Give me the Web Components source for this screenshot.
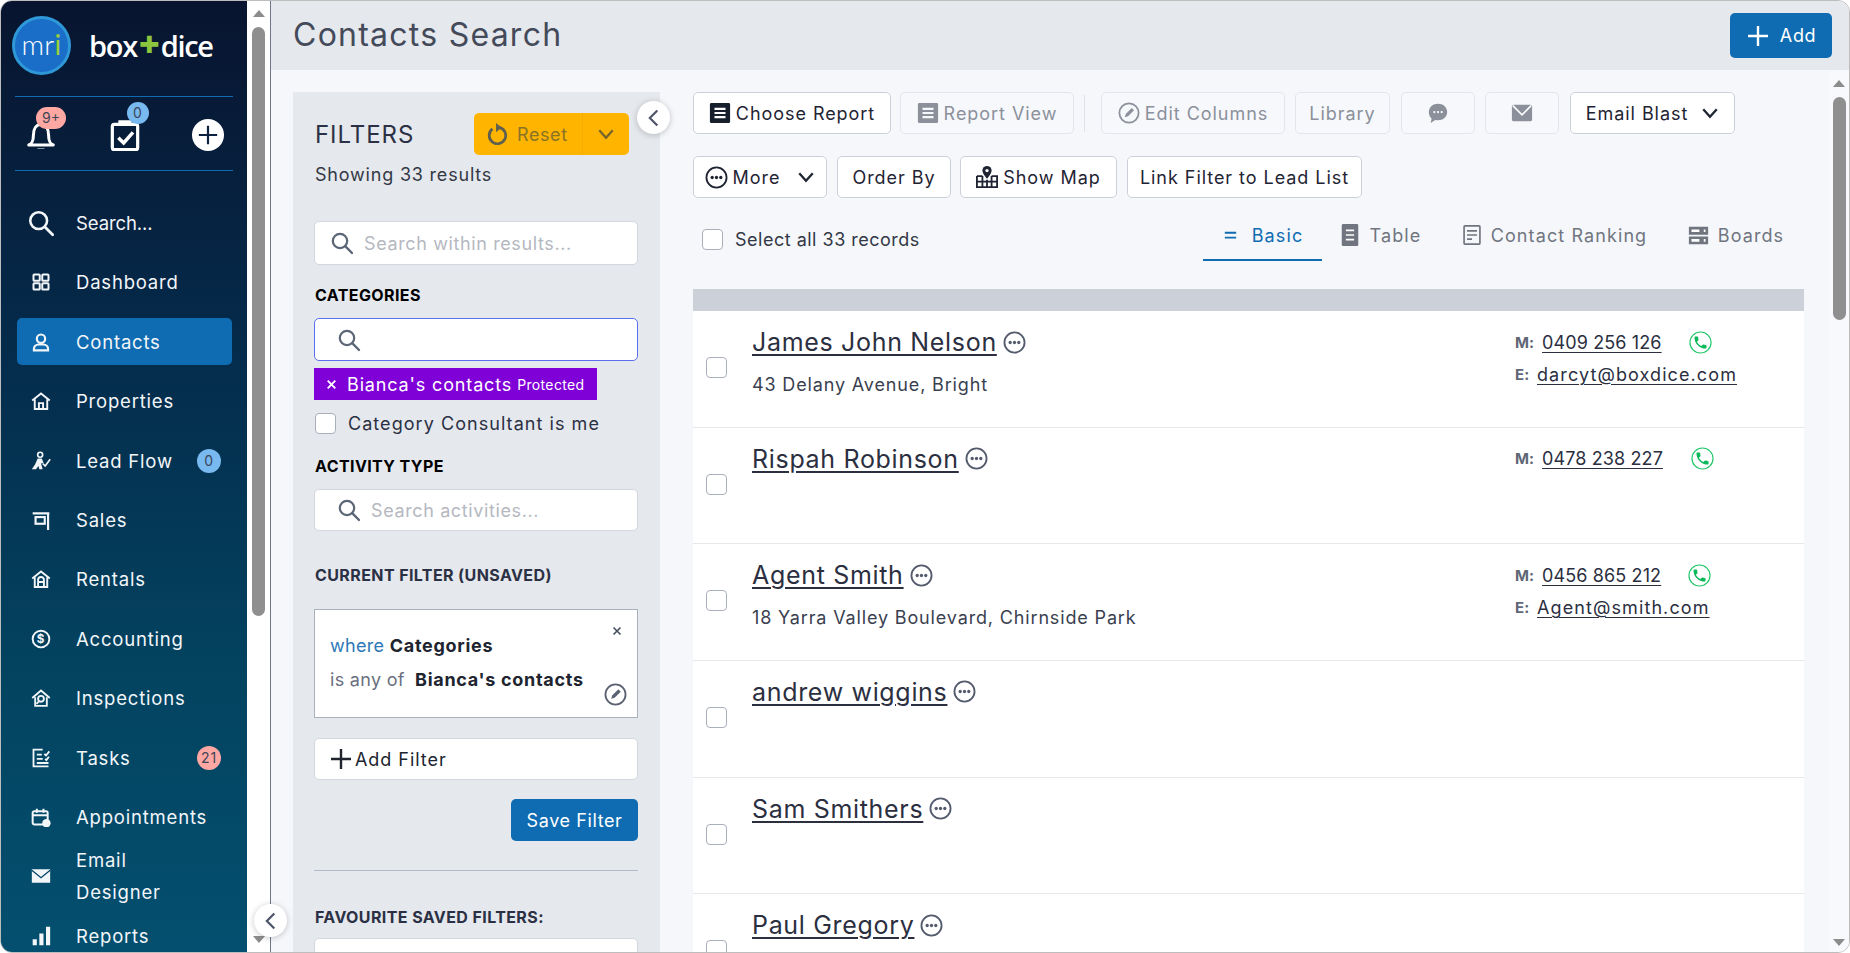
<!DOCTYPE html>
<html lang="en">
<head>
<meta charset="utf-8">
<title>Contacts Search</title>
<style>
html, body { margin: 0; height: 100%; overflow: hidden; background: #fff; }
body { font-family: Inter, "Open Sans", "Liberation Sans", sans-serif; color: #2b3044; }
</style>
</head>
<body>
<bd-app></bd-app>
<script>
// every icon used on the page, keyed by name
const ICONS = {
  search: '<circle cx="10" cy="10" r="7.2" fill="none" stroke="currentColor" stroke-width="2.2"/><path d="M15.2 15.2 22 22" stroke="currentColor" stroke-width="2.4" stroke-linecap="round"/>',
  dashboard: '<g fill="none" stroke="currentColor" stroke-width="2.4"><rect x="3" y="3" width="7.5" height="7.5" rx="1"/><rect x="13.5" y="3" width="7.5" height="7.5" rx="1"/><rect x="3" y="13.5" width="7.5" height="7.5" rx="1"/><rect x="13.5" y="13.5" width="7.5" height="7.5" rx="1"/></g>',
  contacts: '<g fill="none" stroke="currentColor" stroke-width="2.6"><circle cx="12" cy="8" r="5"/><path d="M3.5 22v-1.5c0-3.2 2.6-5.5 5.5-5.5h6c2.9 0 5.5 2.3 5.5 5.5V22z"/></g>',
  properties: '<g fill="none" stroke="currentColor" stroke-width="2.3"><path d="M1.5 11.5 12 3l10.5 8.5"/><path d="M4.5 10v11.5h15V10"/><path d="M9.5 21.5v-7h5v7"/></g>',
  leadflow: '<circle cx="11" cy="4.5" r="3" fill="none" stroke="currentColor" stroke-width="2"/><path d="M8 9h5l2 5-3 1 2 7H10l-1-4-3 4H1l4-6z" fill="currentColor"/><path d="m14 15 3 3 6-8" fill="none" stroke="currentColor" stroke-width="2"/>',
  sales: '<path d="M2 4h20M20.5 4v20" fill="none" stroke="currentColor" stroke-width="2.6"/><rect x="5.5" y="8.5" width="11" height="8" fill="none" stroke="currentColor" stroke-width="2.6"/>',
  rentals: '<g fill="none" stroke="currentColor" stroke-width="2.3"><path d="M1.5 11.5 12 3l10.5 8.5"/><path d="M4.5 10v11.5h15V10"/><path d="M8.5 21.5V13a3.5 3.5 0 0 1 7 0v8.5M8.5 15.5h7"/></g>',
  accounting: '<circle cx="12" cy="12" r="10" fill="none" stroke="currentColor" stroke-width="2.3"/><text x="12" y="17" font-size="14" font-weight="700" text-anchor="middle" fill="currentColor">$</text>',
  inspections: '<g fill="none" stroke="currentColor" stroke-width="2.2"><path d="M1.5 12 12 3l10.5 9"/><path d="M5 11v10.5h14V11"/><circle cx="12" cy="13" r="3.5"/><path d="m9.5 16-3 3"/></g>',
  tasks: '<g fill="none" stroke="currentColor" stroke-width="2.2"><path d="M21 22H3V2h11"/><path d="M7 8h6M7 13h7M7 18h14"/><path d="m16 7 2 2 4-5M17 13l1.5 1.5 3-4"/></g>',
  appointments: '<g fill="none" stroke="currentColor" stroke-width="2.4"><rect x="2" y="5" width="18" height="16" rx="2"/><path d="M2 10h18M7 2v5M15 2v5"/></g><circle cx="18.5" cy="19.5" r="5" fill="currentColor"/>',
  email: '<path d="M1 4h22v16H1z" fill="currentColor"/><path d="m1 5 11 9 11-9" fill="none" stroke="#024463" stroke-width="1.5"/>',
  reports: '<path d="M2 16h5v7H2zM10 9h5v14h-5zM18 1h5v22h-5z" fill="currentColor"/>',
  bell: '<path d="M1.5 20.5c2.500-1 4-2.500 4-8.500 0-5.500 2.500-9 6.500-9s6.500 3.500 6.500 9c0 6 1.500 7.500 4 8.500z" fill="none" stroke="currentColor" stroke-width="2.6" stroke-linejoin="round"/><path d="M9 23.500h6a3 3 0 0 1-6 0z" fill="currentColor"/>',
  clipboard: '<rect x="2.5" y="4" width="19" height="19" rx="1.5" fill="none" stroke="currentColor" stroke-width="2.4"/><path d="M8 4V2h8v2" fill="none" stroke="currentColor" stroke-width="2"/><path d="m7 14 4 4 7-8" fill="none" stroke="currentColor" stroke-width="2.6"/>',
  plus: '<path d="M12 2v20M2 12h20" stroke="currentColor" stroke-width="2.4" fill="none"/>',
  chevronLeft: '<path d="M16 3 7 12l9 9" fill="none" stroke="currentColor" stroke-width="2.6"/>',
  chevronDown: '<path d="M3 7l9 10 9-10" fill="none" stroke="currentColor" stroke-width="3"/>',
  reset: '<path d="M7 6.5a9 9 0 1 0 8-1.5" fill="none" stroke="currentColor" stroke-width="3"/><path d="M11 0l6 5-6 5z" fill="currentColor"/>',
  close: '<path d="M5 5l14 14M19 5 5 19" stroke="currentColor" stroke-width="3.4" fill="none"/>',
  pencil: '<circle cx="12" cy="12" r="10.5" fill="none" stroke="currentColor" stroke-width="1.9"/><path d="M7.5 16.5l1-3.5 6.5-6.5 2.5 2.5-6.5 6.5z" fill="currentColor"/>',
  report: '<rect x="1" y="1" width="22" height="22" rx="1.5" fill="currentColor"/><path d="M6 7.5h12M6 12h12M6 16.5h12" stroke="var(--icon-cut, #fff)" stroke-width="2.2"/>',
  dots: '<circle cx="12" cy="12" r="10.5" fill="none" stroke="currentColor" stroke-width="1.9"/><circle cx="7.5" cy="12" r="1.7" fill="currentColor"/><circle cx="12" cy="12" r="1.7" fill="currentColor"/><circle cx="16.5" cy="12" r="1.7" fill="currentColor"/>',
  map: '<path d="M1 11h6M17 11h6v12H1V11M1 17h22M7 11v12M12 15v8M17 11v12" fill="none" stroke="currentColor" stroke-width="2"/><path d="M12 0a5 5 0 0 0-5 5c0 3.5 5 9 5 9s5-5.500 5-9a5 5 0 0 0-5-5z" fill="currentColor"/><circle cx="12" cy="5" r="1.8" fill="#fff"/>',
  chat: '<path d="M12 2c5.5 0 10 3.8 10 9s-4.5 9-10 9c-1 0-2-.1-2.9-.4L4 23l1-4.9C3 16.5 2 14 2 11c0-5.2 4.500-9 10-9z" fill="currentColor"/><circle cx="8" cy="11" r="1.2" fill="#fff"/><circle cx="12" cy="11" r="1.2" fill="#fff"/><circle cx="16" cy="11" r="1.2" fill="#fff"/>',
  mail: '<rect x="1" y="3" width="22" height="18" rx="2" fill="currentColor"/><path d="m2 4 10 10L22 4" fill="none" stroke="#fff" stroke-width="1.7"/>',
  lines: '<path d="M4 8h16M4 15h16" stroke="currentColor" stroke-width="2.8" fill="none"/>',
  table: '<rect x="3" y="0" width="18" height="24" rx="1.5" fill="currentColor"/><path d="M7.5 7h9M7.5 12h9M7.5 17h9" stroke="#fff" stroke-width="1.8"/>',
  ranking: '<rect x="2.5" y="1" width="19" height="22" rx="1" fill="none" stroke="currentColor" stroke-width="2"/><path d="M6 7h12M6 12h12M6 17h6" stroke="currentColor" stroke-width="2" fill="none"/>',
  boards: '<path d="M1 2h22v9H1zM1 13h22v9H1z" fill="currentColor"/><path d="M4 5h9v3H4zM4 16h9v3H4z M18 5h2v3h-2zM18 16h2v3h-2z" fill="#fff"/>',
  phone: '<circle cx="12" cy="12" r="11" fill="none" stroke="#22c76a" stroke-width="1.2"/><path transform="translate(3.6 3.6) scale(.7)" d="M6.6 10.8c1.4 2.8 3.8 5.1 6.6 6.6l2.2-2.2c.3-.3.7-.4 1-.2 1.1.4 2.3.6 3.6.6.6 0 1 .4 1 1V20c0 .6-.4 1-1 1C10.6 21 3 13.4 3 4c0-.6.4-1 1-1h3.5c.6 0 1 .4 1 1 0 1.3.2 2.5.6 3.6.1.3 0 .7-.2 1z" fill="#0bb85a"/>'
};

function icon(name, size, extra) {
  return `<svg viewBox="0 0 24 24" width="${size}" height="${size}" style="display:block;flex:none;${extra || ''}" aria-hidden="true">${ICONS[name]}</svg>`;
}

function mount(el, html) {
  el.attachShadow({ mode: 'open' }).innerHTML = html;
}

// grey scroll rail, thumb sizes come from attributes
class FakeScrollbar extends HTMLElement {
  connectedCallback() {
    const top = this.getAttribute('top');
    const len = this.getAttribute('length');
    mount(this, `<style>
      :host { display: flex; flex-direction: column; align-items: center; height: 100%; width: 100%; box-sizing: border-box; }
      .up, .down { width: 0; height: 0; border-left: 6px solid transparent; border-right: 6px solid transparent; flex: none; }
      .up { border-bottom: 7px solid #8c8c8c; margin-top: ${this.getAttribute('arrow') || 9}px; }
      .thumb { width: 13px; height: ${len}px; margin-top: ${top}px; background: #8f8f8f; border-radius: 7px; flex: none; }
      .down { border-top: 7px solid #8c8c8c; margin-top: auto; margin-bottom: ${this.getAttribute('bottom') || 9}px; }
    </style><div class="up"></div><div class="thumb"></div><div class="down"></div>`);
  }
}
customElements.define('fake-scrollbar', FakeScrollbar);

class RoundToggle extends HTMLElement {
  connectedCallback() {
    mount(this, `<style>
      :host { display: flex; position: absolute; width: 33px; height: 33px; border-radius: 50%; background: #fff; box-shadow: 0 1px 6px rgba(0,0,0,.22); align-items: center; justify-content: center; color: #4d5468; z-index: 5; }
    </style>${icon('chevronLeft', 20)}`);
  }
}
customElements.define('round-toggle', RoundToggle);

class CountBadge extends HTMLElement {
  connectedCallback() {
    const color = this.getAttribute('color');
    mount(this, `<style>
      :host { display: inline-flex; align-items: center; justify-content: center; background: ${color}; color: #3d4558; font-size: 14px; min-width: 24px; height: 24px; border-radius: 12px; box-sizing: border-box; font-weight: 400; }
    </style><slot></slot>`);
  }
}
customElements.define('count-badge', CountBadge);

class NavItem extends HTMLElement {
  connectedCallback() {
    const active = this.hasAttribute('active');
    const size = this.getAttribute('size') || 20;
    mount(this, `<style>
      :host { display: block; height: 47px; margin: 0 15px 0 16px; }
      .item { display: flex; align-items: center; height: 100%; border-radius: 5px; color: #f2f6f9; background: ${active ? '#0f6cb2' : 'transparent'}; font-size: 18.5px; line-height: 32px; letter-spacing: .8px; }
      .ico { width: 48px; display: flex; justify-content: center; flex: none; }
      .label { margin-left: 11px; flex: 1; }
      .badge { margin-right: 11px; display: flex; }
    </style>
    <div class="item">
      <span class="ico">${icon(this.getAttribute('icon'), size)}</span>
      <span class="label"><slot></slot></span>
      <span class="badge"><slot name="badge"></slot></span>
    </div>`);
  }
}
customElements.define('nav-item', NavItem);

class BdLogo extends HTMLElement {
  connectedCallback() {
    mount(this, `<style>
      :host { display: flex; align-items: center; height: 95px; padding: 0 0 6px 11px; box-sizing: border-box; }
      .mri { border-radius: 50%; background: #1a6ec8; border: 3px solid #2f98d8; display: flex; align-items: center; justify-content: center; color: #fff; font: 300 28px/1 Lato, sans-serif; letter-spacing: .3px; padding-bottom: 3px; flex: none; width: 53px; height: 50px; }
      .mri b { font-weight: 400; color: #9ccf3c; }
      .word { margin-left: 18px; color: #fff; font: 600 29px/1 "Open Sans", sans-serif; letter-spacing: -1.3px; display: flex; align-items: center; }
      .word i { font-style: normal; color: #8cc63f; font-weight: 800; font-size: 36px; margin: -3px 2px 0 2px; }
    </style>
    <div class="mri"><span>mr<b>i</b></span></div>
    <div class="word">box<i>+</i>dice</div>`);
  }
}
customElements.define('bd-logo', BdLogo);

class QuickIcons extends HTMLElement {
  connectedCallback() {
    mount(this, `<style>
      :host { display: block; position: relative; height: 73px; margin: 0 14px 0 14px; border-top: 1px solid #0f6cb2; border-bottom: 1px solid #0f6cb2; color: #fff; }
      .row { display: flex; height: 100%; align-items: center; padding-left: 12px; }
      .slot { position: relative; width: 83.5px; flex: none; margin-top: 2px; }
      .pill { position: absolute; left: 9px; top: -14px; width: 30px; height: 22px; background: #ffa8a3; border-radius: 11px; color: #3d4558; font-size: 14px; display: flex; align-items: center; justify-content: center; }
      .dot { position: absolute; left: 16px; top: -17px; width: 22px; height: 22px; background: #78b9f0; border-radius: 50%; color: #3d4558; font-size: 14px; display: flex; align-items: center; justify-content: center; }
      .add { width: 32px; height: 32px; border-radius: 50%; background: #fff; color: #0b2242; display: flex; align-items: center; justify-content: center; margin-left: -2px; }
    </style>
    <div class="row">
      <div class="slot">${icon('bell', 28)}<span class="pill">9+</span></div>
      <div class="slot">${icon('clipboard', 32, 'margin-left:-2px')}<span class="dot">0</span></div>
      <div class="slot"><div class="add">${icon('plus', 22)}</div></div>
    </div>`);
  }
}
customElements.define('quick-icons', QuickIcons);

class BdSidebar extends HTMLElement {
  connectedCallback() {
    mount(this, `<style>
      :host { display: flex; position: relative; width: 269px; height: 100%; flex: none; border-right: 1px solid #70758c; box-sizing: content-box; }
      .panel { width: 246px; height: 100%; background: linear-gradient(180deg, #08142f 0%, #052a4a 35%, #034360 70%, #044f6f 100%); overflow: hidden; flex: none; }
      nav { display: flex; flex-direction: column; gap: 12.4px; padding-top: 28.5px; }
      .rail { width: 23px; height: 100%; background: #fff; }
      round-toggle { left: 253px; bottom: 15px; }
    </style>
    <div class="panel">
      <bd-logo></bd-logo>
      <quick-icons></quick-icons>
      <nav>
        <nav-item icon="search" size="28"><span style="letter-spacing:-.1px">Search...</span></nav-item>
        <nav-item icon="dashboard">Dashboard</nav-item>
        <nav-item icon="contacts" active>Contacts</nav-item>
        <nav-item icon="properties">Properties</nav-item>
        <nav-item icon="leadflow">Lead Flow<count-badge slot="badge" color="#78b9f0">0</count-badge></nav-item>
        <nav-item icon="sales">Sales</nav-item>
        <nav-item icon="rentals">Rentals</nav-item>
        <nav-item icon="accounting">Accounting</nav-item>
        <nav-item icon="inspections">Inspections</nav-item>
        <nav-item icon="tasks">Tasks<count-badge slot="badge" color="#ffa8a3">21</count-badge></nav-item>
        <nav-item icon="appointments">Appointments</nav-item>
        <nav-item icon="email">Email<br>Designer</nav-item>
        <nav-item icon="reports">Reports</nav-item>
      </nav>
    </div>
    <div class="rail"><fake-scrollbar top="10" length="589" arrow="9" bottom="9"></fake-scrollbar></div>
    <round-toggle></round-toggle>`);
  }
}
customElements.define('bd-sidebar', BdSidebar);

class BdButton extends HTMLElement {
  connectedCallback() {
    const off = this.hasAttribute('disabled');
    mount(this, `<style>
      :host { display: inline-flex; width: ${this.getAttribute('width')}px; height: 42px; flex: none; box-sizing: border-box; align-items: center; justify-content: center; gap: 5px; border: 1px solid ${off ? '#e2e5eb' : '#ccd0d8'}; border-radius: 5px; background: ${off ? '#f7f8fb' : '#fff'}; color: ${off ? '#8b909b' : '#1f2433'}; font-size: 18px; letter-spacing: .95px; --icon-cut: ${off ? '#f7f8fb' : '#fff'}; white-space: nowrap; }
    </style><slot name="icon"></slot><slot></slot>`);
  }
}
customElements.define('bd-button', BdButton);

// plain icon span, so light DOM callers can drop icons into slots
class BdIcon extends HTMLElement {
  connectedCallback() {
    mount(this, `<style>:host { display: inline-flex; color: ${this.getAttribute('color') || 'inherit'}; }</style>${icon(this.getAttribute('name'), this.getAttribute('size') || 22)}`);
  }
}
customElements.define('bd-icon', BdIcon);

class TickBox extends HTMLElement {
  connectedCallback() {
    mount(this, `<style>
      :host { display: block; width: 21px; height: 21px; flex: none; box-sizing: border-box; background: #fff; border: 1px solid #a9afbb; border-radius: 4px; }
    </style>`);
  }
}
customElements.define('tick-box', TickBox);

class FilterInput extends HTMLElement {
  connectedCallback() {
    const focused = this.hasAttribute('focused');
    const pad = this.getAttribute('pad') || 22;
    const ph = this.getAttribute('placeholder') || '';
    const showIcon = !this.hasAttribute('noicon');
    mount(this, `<style>
      :host { display: flex; align-items: center; height: ${this.getAttribute('height') || 42}px; width: 324px; box-sizing: border-box; margin-left: -1px; padding-left: ${pad}px; background: #fff; border: 1px solid ${focused ? '#5a6ff0' : '#d3d7de'}; border-radius: 5px; color: #5b6676; }
      span { margin-left: ${this.getAttribute('gap') || 10}px; color: #b5b8bf; font-size: 18px; letter-spacing: .62px; white-space: nowrap; }
    </style>${showIcon ? icon('search', 24) : ''}<span>${ph}</span>`);
  }
}
customElements.define('filter-input', FilterInput);

class SectionLabel extends HTMLElement {
  connectedCallback() {
    mount(this, `<style>
      :host { display: block; height: 20px; line-height: 20px; font-size: 16px; font-weight: 700; color: ${this.getAttribute('color') || '#000'}; white-space: nowrap; letter-spacing: .4px; }
    </style><slot></slot>`);
  }
}
customElements.define('section-label', SectionLabel);

class ResetButton extends HTMLElement {
  connectedCallback() {
    mount(this, `<style>
      :host { display: flex; width: 155px; height: 42px; background: #ffb400; border-radius: 5px; color: #8a7326; font-size: 18px; letter-spacing: .6px; flex: none; }
      .main { width: 109px; display: flex; align-items: center; padding-left: 12px; box-sizing: border-box; gap: 9px; border-right: 1px solid #f5ae00; }
      .more { flex: 1; display: flex; align-items: center; justify-content: center; color: #75652c; }
      .main svg { color: #5f5f50; }
    </style>
    <div class="main">${icon('reset', 22)}<span>Reset</span></div>
    <div class="more">${icon('chevronDown', 18)}</div>`);
  }
}
customElements.define('reset-button', ResetButton);

class CategoryTag extends HTMLElement {
  connectedCallback() {
    mount(this, `<style>
      :host { display: flex; align-items: center; width: 283px; height: 32px; margin-left: -1px; box-sizing: border-box; background: #8000d8; color: #fff; padding-left: 11px; font-size: 18px; letter-spacing: .85px; white-space: nowrap; }
      small { font-size: 14px; margin-left: 5px; letter-spacing: .35px; }
      svg { margin-right: 9px; }
    </style>${icon('close', 13)}<slot></slot><small>Protected</small>`);
  }
}
customElements.define('category-tag', CategoryTag);

class FilterCard extends HTMLElement {
  connectedCallback() {
    mount(this, `<style>
      :host { display: block; position: relative; height: 109px; width: 324px; margin-left: -1px; box-sizing: border-box; background: #fff; border: 1px solid #a9afbb; padding: 19px 15px 0; font-size: 18px; letter-spacing: .3px; }
      p { margin: 0; height: 34px; line-height: 34px; white-space: nowrap; color: #6a7080; }
      b { color: #20242f; font-weight: 700; letter-spacing: .7px; }
      .where { color: #2b78b8; }
      .x { position: absolute; right: 14px; top: 15px; color: #4b5262; }
      .edit { position: absolute; right: 10px; bottom: 11px; color: #5b6272; }
      .tab { margin-left: 5px; }
    </style>
    <p><span class="where">where</span> <b>Categories</b></p>
    <p>is any of <b class="tab">Bianca's contacts</b></p>
    <span class="x">${icon('close', 12)}</span>
    <span class="edit">${icon('pencil', 23)}</span>`);
  }
}
customElements.define('filter-card', FilterCard);

class FilterPanel extends HTMLElement {
  connectedCallback() {
    mount(this, `<style>
      :host { display: block; position: relative; width: 367px; height: 100%; flex: none; background: #e5e8ed; box-sizing: border-box; padding: 21px 23px 0 22px; overflow: visible; }
      .clip { height: 100%; overflow: hidden; margin: 0 -1px 0 -1px; padding: 0 1px; }
      .head { display: flex; align-items: center; justify-content: space-between; height: 42px; padding-right: 8px; }
      h2 { margin: 0; font-size: 24px; font-weight: 400; color: #2b3044; letter-spacing: .95px; }
      .count { margin-top: 8px; height: 24px; line-height: 24px; font-size: 18px; letter-spacing: .8px; color: #333845; white-space: nowrap; }
      .check { display: flex; align-items: center; gap: 12px; height: 21px; margin-top: 13px; font-size: 18px; letter-spacing: 1.05px; color: #2b3044; white-space: nowrap; }
      .add { display: flex; align-items: center; gap: 2px; height: 42px; width: 324px; margin: 20px 0 0 -1px; padding-left: 14px; box-sizing: border-box; background: #fff; border: 1px solid #d3d7de; border-radius: 5px; font-size: 18px; letter-spacing: .95px; color: #20242f; }
      .save { display: flex; justify-content: flex-end; margin-top: 19px; margin-right: -1px; }
      .save span { display: flex; align-items: center; justify-content: center; width: 127px; height: 42px; background: #0f6cb2; color: #fff; border-radius: 5px; font-size: 18px; letter-spacing: .6px; }
      hr { border: 0; height: 1px; background: #b4b9c6; margin: 29px -1px 0 -1px; }
      round-toggle { right: -10px; top: 9px; }
    </style>
    <div class="clip">
    <div class="head"><h2>FILTERS</h2><reset-button></reset-button></div>
    <div class="count">Showing 33 results</div>
    <filter-input style="margin-top:34px" height="44" pad="15" gap="10" placeholder="Search within results..."></filter-input>
    <section-label style="margin-top:20px">CATEGORIES</section-label>
    <filter-input style="margin-top:13px" height="43" focused></filter-input>
    <category-tag style="margin-top:7px">Bianca's contacts</category-tag>
    <div class="check"><tick-box></tick-box>Category Consultant is me</div>
    <section-label style="margin-top:22px">ACTIVITY TYPE</section-label>
    <filter-input style="margin-top:13px" placeholder="Search activities..."></filter-input>
    <section-label style="margin-top:34px" color="#2b3044">CURRENT FILTER (UNSAVED)</section-label>
    <filter-card style="margin-top:24px"></filter-card>
    <div class="add">${icon('plus', 24, 'color:#20242f')}Add Filter</div>
    <div class="save"><span>Save Filter</span></div>
    <hr>
    <section-label style="margin-top:36px" color="#2b3044">FAVOURITE SAVED FILTERS:</section-label>
    <filter-input style="margin-top:11px" pad="18" noicon placeholder="Select a saved filter..."></filter-input>
    </div>
    <round-toggle></round-toggle>`);
  }
}
customElements.define('filter-panel', FilterPanel);

class ViewTabs extends HTMLElement {
  connectedCallback() {
    const tab = (name, size, label, w, active) => `<div class="tab ${active ? 'on' : ''}" style="width:${w}px">${icon(name, size)}<span>${label}</span></div>`;
    mount(this, `<style>
      :host { display: flex; height: 50px; margin-top: 13px; align-items: stretch; justify-content: flex-end; margin-right: 3px; }
      .tab { display: flex; align-items: center; justify-content: center; gap: 9px; color: #70757f; font-size: 18px; letter-spacing: 1.1px; box-sizing: border-box; border-bottom: 2px solid transparent; white-space: nowrap; }
      .on { color: #0f6cb2; border-bottom-color: #0f6cb2; gap: 13px; }
    </style>
    ${tab('lines', 17, 'Basic', 119, true)}
    ${tab('table', 22, 'Table', 116)}
    ${tab('ranking', 20, 'Contact Ranking', 233)}
    ${tab('boards', 21, 'Boards', 130)}`);
  }
}
customElements.define('view-tabs', ViewTabs);

class ContactRow extends HTMLElement {
  connectedCallback() {
    const name = this.getAttribute('name');
    const address = this.getAttribute('address') || '';
    const mobile = this.getAttribute('mobile');
    const mail = this.getAttribute('mail');
    const callGap = this.getAttribute('callgap') || 0;
    mount(this, `<style>
      :host { display: block; position: relative; height: 116.67px; box-sizing: border-box; background: #fff; border-bottom: 1px solid #e6e8ec; flex: none; }
      .grid { display: grid; grid-template-columns: 59px 763px 1fr; height: 100%; }
      .tick { padding: 46px 0 0 13px; }
      .main { padding-top: 15px; }
      .name { display: flex; align-items: center; gap: 6px; height: 32px; }
      .name a { font-size: 25px; letter-spacing: .68px; color: #2b2f3f; text-decoration: underline; text-underline-offset: 3px; text-decoration-thickness: 1.5px; white-space: nowrap; }
      .name svg { color: #545b6d; }
      .addr { margin-top: 15px; height: 24px; line-height: 24px; font-size: 18px; letter-spacing: .85px; color: #3a3f50; white-space: nowrap; }
      .side { padding-top: 15px; font-size: 18px; letter-spacing: .12px; white-space: nowrap; }
      .line { display: flex; align-items: center; height: 32px; }
      .line b { font-size: 15px; color: #5f6675; font-weight: 700; }
      .line a { color: #2b2f3f; text-decoration: underline; text-underline-offset: 3px; text-decoration-thickness: 1px; }
      .e a { letter-spacing: 1.1px; }
      .m b { width: 27px; }
      .e b { width: 22px; }
      .call { margin-left: ${callGap}px; }
    </style>
    <div class="grid">
      <div class="tick"><tick-box></tick-box></div>
      <div class="main">
        <div class="name"><a>${name}</a>${icon('dots', 23)}</div>
        ${address ? `<div class="addr">${address}</div>` : ''}
      </div>
      <div class="side">
        ${mobile ? `<div class="line m"><b>M:</b><a>${mobile}</a><span class="call">${icon('phone', 23)}</span></div>` : ''}
        ${mail ? `<div class="line e"><b>E:</b><a>${mail}</a></div>` : ''}
      </div>
    </div>`);
  }
}
customElements.define('contact-row', ContactRow);

class ContactsView extends HTMLElement {
  connectedCallback() {
    mount(this, `<style>
      :host { display: block; flex: 1; min-width: 0; height: 100%; box-sizing: border-box; padding: 0 25px 0 33px; overflow: hidden; }
      .bar { display: flex; align-items: center; gap: 10px; height: 42px; }
      .bar + .bar { margin-top: 22px; }
      .sep { width: 1px; height: 37px; background: #dfe2e8; margin: 0 6px 0 0; flex: none; }
      .sel { display: flex; align-items: flex-start; height: 91px; box-sizing: border-box; }
      .pick { display: flex; align-items: center; gap: 12px; padding: 31px 0 0 9px; font-size: 18px; letter-spacing: .5px; color: #333845; white-space: nowrap; width: 500px; flex: none; }
      view-tabs { flex: 1; }
      .head { height: 22px; background: #cbd0d9; }
      .rows { display: flex; flex-direction: column; }
    </style>
    <div class="bar">
      <bd-button width="198"><bd-icon slot="icon" name="report" size="22" color="#18202c"></bd-icon>Choose Report</bd-button>
      <bd-button width="174" disabled style="margin-left:-1px"><bd-icon slot="icon" name="report" size="22" color="#8b909b"></bd-icon>Report View</bd-button>
      <span class="sep"></span>
      <bd-button width="184" disabled><bd-icon slot="icon" name="pencil" size="22" color="#8b909b"></bd-icon>Edit Columns</bd-button>
      <bd-button width="95" disabled>Library</bd-button>
      <bd-button width="74" disabled style="margin-left:1px"><bd-icon slot="icon" name="chat" size="22" color="#8b909b"></bd-icon></bd-button>
      <bd-button width="74" disabled><bd-icon slot="icon" name="mail" size="22" color="#8b909b"></bd-icon></bd-button>
      <bd-button width="165" style="margin-left:1px">Email Blast<bd-icon name="chevronDown" size="18" style="margin-left:8px"></bd-icon></bd-button>
    </div>
    <div class="bar">
      <bd-button width="134"><bd-icon slot="icon" name="dots" size="23"></bd-icon>More<bd-icon name="chevronDown" size="18" style="margin-left:12px"></bd-icon></bd-button>
      <bd-button width="114">Order By</bd-button>
      <bd-button width="157" style="margin-left:-1px"><bd-icon slot="icon" name="map" size="22"></bd-icon>Show Map</bd-button>
      <bd-button width="235">Link Filter to Lead List</bd-button>
    </div>
    <div class="sel">
      <div class="pick"><tick-box></tick-box>Select all 33 records</div>
      <view-tabs></view-tabs>
    </div>
    <div class="head"></div>
    <div class="rows">
      <contact-row name="James John Nelson" address="43 Delany Avenue, Bright" mobile="0409 256 126" mail="darcyt@boxdice.com" callgap="27"></contact-row>
      <contact-row name="Rispah Robinson" mobile="0478 238 227" callgap="28"></contact-row>
      <contact-row name="Agent Smith" address="18 Yarra Valley Boulevard, Chirnside Park" mobile="0456 865 212" mail="Agent@smith.com" callgap="27"></contact-row>
      <contact-row name="andrew wiggins"></contact-row>
      <contact-row name="Sam Smithers"></contact-row>
      <contact-row name="Paul Gregory"></contact-row>
    </div>`);
  }
}
customElements.define('contacts-view', ContactsView);

class PageHeader extends HTMLElement {
  connectedCallback() {
    mount(this, `<style>
      :host { display: flex; align-items: center; justify-content: space-between; height: 69px; flex: none; background: #e5e8ed; padding: 0 17px 0 22px; box-sizing: border-box; }
      h1 { margin: 0; font-size: 32px; font-weight: 400; color: #444a59; letter-spacing: 1.25px; margin-top: -2px; }
      .add { display: flex; align-items: center; gap: 10px; justify-content: center; width: 102px; height: 45px; background: #0f6cb2; color: #fff; border-radius: 5px; font-size: 18px; letter-spacing: .6px; }
    </style>
    <h1><slot></slot></h1>
    <div class="add">${icon('plus', 24)}Add</div>`);
  }
}
customElements.define('page-header', PageHeader);

class BdApp extends HTMLElement {
  connectedCallback() {
    mount(this, `<style>
      :host { display: flex; width: 1850px; height: 953px; box-sizing: border-box; border: 1px solid #bdbdbd; border-radius: 12px; overflow: hidden; background: #f5f7fb; }
      main { flex: 1; min-width: 0; display: flex; flex-direction: column; height: 100%; }
      .body { flex: 1; min-height: 0; display: flex; padding: 22px 0 0 22px; }
      .rail { width: 20px; flex: none; height: calc(100% + 22px); margin-top: -22px; background: #f8f9fc; box-sizing: border-box; }
      .stretch { display: flex; flex: 1; min-width: 0; height: 100%; }
    </style>
    <bd-sidebar></bd-sidebar>
    <main>
      <page-header>Contacts Search</page-header>
      <div class="body">
        <div class="stretch">
          <filter-panel></filter-panel>
          <contacts-view></contacts-view>
        </div>
        <div class="rail"><fake-scrollbar top="10" length="223" arrow="10" bottom="6"></fake-scrollbar></div>
      </div>
    </main>`);
  }
}
customElements.define('bd-app', BdApp);
</script>
</body>
</html>
